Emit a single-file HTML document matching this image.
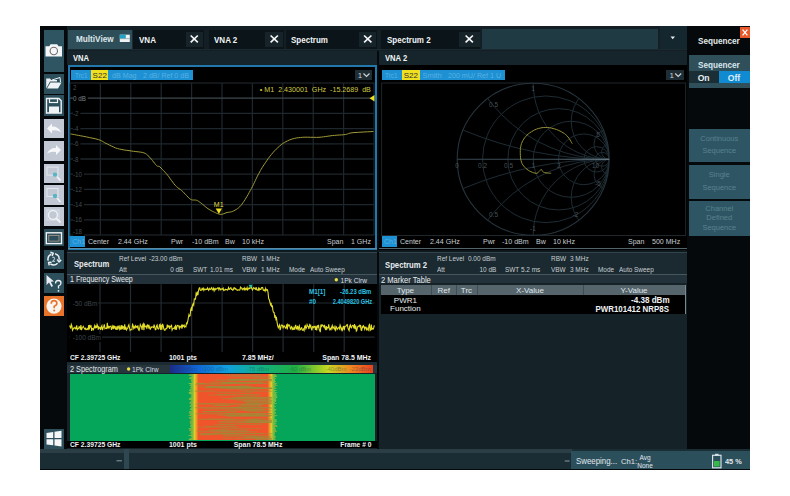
<!DOCTYPE html><html><head><meta charset="utf-8"><style>
html,body{margin:0;padding:0;background:#fff;width:790px;height:496px;overflow:hidden;position:relative;font-family:"Liberation Sans",sans-serif;}
.t{position:absolute;white-space:nowrap;line-height:1.2;}
svg{position:absolute;left:0;top:0;}
</style></head><body>
<div style="position:absolute;left:40px;top:26px;width:710px;height:444px;background:#05090b;"></div>
<div style="position:absolute;left:44px;top:29.5px;width:20px;height:42.0px;background:#2f5562;"></div>
<div style="position:absolute;left:44px;top:73.7px;width:20px;height:20.0px;background:#2c4f5b;"></div>
<div style="position:absolute;left:44px;top:95px;width:20px;height:21.200000000000003px;background:#2c4f5b;"></div>
<div style="position:absolute;left:44px;top:118.8px;width:20px;height:19.60000000000001px;background:#c2c9d4;"></div>
<div style="position:absolute;left:44px;top:141.4px;width:20px;height:19.19999999999999px;background:#c2c9d4;"></div>
<div style="position:absolute;left:44px;top:163.6px;width:20px;height:19.099999999999994px;background:#c2c9d4;"></div>
<div style="position:absolute;left:44px;top:185px;width:20px;height:20.19999999999999px;background:#c2c9d4;"></div>
<div style="position:absolute;left:44px;top:207.2px;width:20px;height:19.200000000000017px;background:#c2c9d4;"></div>
<div style="position:absolute;left:44px;top:229.4px;width:20px;height:17.099999999999994px;background:#2c4f5b;"></div>
<div style="position:absolute;left:44px;top:249.6px;width:20px;height:19.099999999999994px;background:#2c4f5b;"></div>
<div style="position:absolute;left:44px;top:273px;width:20px;height:20.19999999999999px;background:#2c4f5b;"></div>
<div style="position:absolute;left:44px;top:296.2px;width:20px;height:19.80000000000001px;background:#e8732a;"></div>
<div style="position:absolute;left:44px;top:428.5px;width:20px;height:20.100000000000023px;background:#2c4f5b;"></div>
<svg width="790" height="496"><path d="M45.5,46.2 L49.3,46.2 L50.6,44.2 L57.2,44.2 L58.5,46.2 L62,46.2 L62,56.5 L45.5,56.5 Z" fill="#f4f6f7"/><circle cx="53.8" cy="51" r="3.7" fill="none" stroke="#726a6a" stroke-width="1.1"/><path d="M46.2,78.5 L50,78.5 L51.2,80 L57,80 L57,81.5 L50,81.5 L46.2,88.5 Z" fill="#f0f3f5"/><path d="M50.5,82.5 L61.5,82.5 L58,88.5 L47,88.5 Z" fill="#f0f3f5"/><path d="M52,80 L60,77.5 L60.5,82" fill="none" stroke="#f0f3f5" stroke-width="1"/><path d="M46.5,98.5 L59,98.5 L61.2,100.7 L61.2,113 L46.5,113 Z" fill="none" stroke="#f0f3f5" stroke-width="1.4"/><rect x="49.5" y="98.5" width="8" height="4" fill="none" stroke="#f0f3f5" stroke-width="1.2"/><rect x="49" y="106.5" width="10" height="6.5" fill="#f0f3f5"/><path d="M47,128.5 L52,123.5 L52,126.5 Q58,126 61,132 Q57,129.5 52,130.5 L52,133.5 Z" fill="#f6f7f9"/><path d="M61,150 L56,145 L56,148 Q50,147.5 47,153.5 Q51,151 56,152 L56,155 Z" fill="#f6f7f9"/><rect x="47" y="167.1" width="11" height="8" fill="none" stroke="#e4e8ee" stroke-width="1"/><circle cx="55" cy="174.6" r="2.2" fill="#58b4c6"/><path d="M57,176.6 L60.5,180.6" stroke="#f0f3f5" stroke-width="1.6"/><rect x="47" y="188.5" width="11" height="8" fill="none" stroke="#e4e8ee" stroke-width="1"/><circle cx="55" cy="196" r="2.2" fill="#58b4c6"/><path d="M57,198 L60.5,202" stroke="#f0f3f5" stroke-width="1.6"/><circle cx="53" cy="215" r="4.5" fill="none" stroke="#f0f3f5" stroke-width="1.4"/><rect x="47" y="210" width="12" height="10" fill="none" stroke="#e0e6ea" stroke-width="0.8"/><path d="M56.3,218.3 L60.5,222.5" stroke="#f0f3f5" stroke-width="1.8"/><rect x="46.3" y="232.8" width="15.2" height="10.8" fill="none" stroke="#f0f3f5" stroke-width="1.4"/><rect x="48.8" y="235.3" width="10.2" height="5.8" fill="none" stroke="#c8a898" stroke-width="0.7"/><path d="M55.05,253.79 A5.6,5.6 0 0 1 59.18,259.69 M61.17,259.86 L58.99,261.88 L57.19,259.51 M57.56,263.16 A5.6,5.6 0 0 1 50.39,263.79 M49.24,265.43 L48.59,262.53 L51.54,262.15 M48.19,260.65 A5.6,5.6 0 0 1 51.23,254.12 M50.39,252.31 L53.23,253.19 L52.08,255.94" fill="none" stroke="#eef2f4" stroke-width="1.5" stroke-linejoin="round"/><path d="M52.3,257.3 Q54.8,256.6 54.6,258.6 Q54.4,260 52.4,261.3 L55,261.3" fill="none" stroke="#dfe6ea" stroke-width="0.9"/><path d="M46.5,275 L46.5,285 L49,282.5 L51.5,287 L53,286 L50.8,281.8 L54,281.5 Z" fill="#e8ecf0"/><path d="M55.5,283.5 Q55.5,280.5 58.2,280.5 Q61,280.5 61,283 Q61,285 58.5,286 L58.5,288.5" fill="none" stroke="#f0f3f5" stroke-width="1.3"/><circle cx="58.5" cy="290.8" r="0.9" fill="#f0f3f5"/><circle cx="54" cy="306.1" r="7.6" fill="#f8f4f0"/><path d="M51.2,303.8 Q51.2,300.6 54,300.6 Q56.9,300.6 56.9,303.3 Q56.9,305.2 54.2,306.2 L54.2,308.2" fill="none" stroke="#e8732a" stroke-width="1.6"/><circle cx="54.2" cy="310.6" r="1" fill="#e8732a"/><path d="M46.5,433 L53.2,432 L53.2,438 L46.5,438 Z M54.5,431.8 L61.5,430.8 L61.5,438 L54.5,438 Z M46.5,439.3 L53.2,439.3 L53.2,445.3 L46.5,444.5 Z M54.5,439.3 L61.5,439.3 L61.5,446.5 L54.5,445.5 Z" fill="#f4f6f7"/></svg>
<div style="position:absolute;left:67px;top:26px;width:620px;height:24.5px;background:#131f25;"></div>
<div style="position:absolute;left:67px;top:48.7px;width:620px;height:1.7999999999999972px;background:#1b2930;"></div>
<div style="position:absolute;left:68px;top:29.7px;width:64px;height:19.000000000000004px;background:#2e4f5a;"></div>
<div style="position:absolute;left:132px;top:29.7px;width:1px;height:19.000000000000004px;background:#1a2a30;"></div>
<div class="t" style="left:75.8px;top:34.2px;font-size:9px;color:#dfe6ea;font-weight:bold;transform:scaleX(0.91);transform-origin:left center;">MultiView</div>
<svg width="790" height="496"><rect x="119.8" y="34.7" width="10" height="7.3" fill="#eef3f6"/><rect x="119.8" y="34.7" width="6" height="3.8" fill="#22a2c2"/><rect x="119.8" y="38.5" width="10" height="0.6" fill="#6a8a96"/></svg>
<div style="position:absolute;left:133px;top:29.7px;width:70.5px;height:19.000000000000004px;background:#0b1418;"></div>
<div style="position:absolute;left:185.8px;top:31.6px;width:16.899999999999977px;height:15.799999999999997px;background:#16242a;"></div>
<div class="t" style="left:138.5px;top:35.0px;font-size:9px;color:#f2f5f7;font-weight:bold;transform:scaleX(0.89);transform-origin:left center;">VNA</div>
<svg width="790" height="496"><path d="M190.7,35.5 L197.8,42.4 M197.8,35.5 L190.7,42.4" stroke="#f4f6f8" stroke-width="1.7"/></svg>
<div style="position:absolute;left:208.6px;top:29.7px;width:75.4px;height:19.000000000000004px;background:#0b1418;"></div>
<div style="position:absolute;left:265.3px;top:31.6px;width:17.899999999999977px;height:15.799999999999997px;background:#16242a;"></div>
<div class="t" style="left:214.1px;top:35.0px;font-size:9px;color:#f2f5f7;font-weight:bold;transform:scaleX(0.89);transform-origin:left center;">VNA 2</div>
<svg width="790" height="496"><path d="M270.6,35.5 L277.9,42.4 M277.9,35.5 L270.6,42.4" stroke="#f4f6f8" stroke-width="1.7"/></svg>
<div style="position:absolute;left:285.7px;top:29.7px;width:91.30000000000001px;height:19.000000000000004px;background:#0b1418;"></div>
<div style="position:absolute;left:359.3px;top:31.6px;width:16.899999999999977px;height:15.799999999999997px;background:#16242a;"></div>
<div class="t" style="left:291.2px;top:35.0px;font-size:9px;color:#f2f5f7;font-weight:bold;transform:scaleX(0.89);transform-origin:left center;">Spectrum</div>
<svg width="790" height="496"><path d="M364.1,35.5 L371.4,42.4 M371.4,35.5 L364.1,42.4" stroke="#f4f6f8" stroke-width="1.7"/></svg>
<div style="position:absolute;left:381px;top:29.7px;width:99.30000000000001px;height:19.000000000000004px;background:#0b1418;"></div>
<div style="position:absolute;left:459px;top:31.6px;width:20.5px;height:15.799999999999997px;background:#16242a;"></div>
<div class="t" style="left:386.5px;top:35.0px;font-size:9px;color:#f2f5f7;font-weight:bold;transform:scaleX(0.89);transform-origin:left center;">Spectrum 2</div>
<svg width="790" height="496"><path d="M465.6,35.5 L472.9,42.4 M472.9,35.5 L465.6,42.4" stroke="#f4f6f8" stroke-width="1.7"/></svg>
<div style="position:absolute;left:481.7px;top:29.3px;width:176.3px;height:19.400000000000002px;background:#203a43;"></div>
<div style="position:absolute;left:660px;top:26px;width:27px;height:22.700000000000003px;background:#15272e;"></div>
<svg width="790" height="496"><path d="M670.5,36.5 L675,36.5 L672.75,39.3 Z" fill="#e8eef0"/></svg>
<div style="position:absolute;left:67px;top:50.5px;width:310px;height:14.0px;background:#16252c;"></div>
<div style="position:absolute;left:378.5px;top:50.5px;width:308.5px;height:14.0px;background:#16252c;"></div>
<div class="t" style="left:73.4px;top:53.1px;font-size:9.3px;color:#f2f5f7;font-weight:bold;transform:scaleX(0.82);transform-origin:left center;">VNA</div>
<div class="t" style="left:384.8px;top:53.1px;font-size:9.3px;color:#f2f5f7;font-weight:bold;transform:scaleX(0.82);transform-origin:left center;">VNA 2</div>
<div style="position:absolute;left:67px;top:65px;width:310px;height:185px;background:#000;"></div>
<div style="position:absolute;left:68px;top:65px;width:309.2px;height:184.8px;background:transparent;border:2px solid #2278aa;box-sizing:border-box;"></div>
<svg width="790" height="496"><rect x="70" y="83" width="304" height="152" fill="none" stroke="#252d32" stroke-width="1"/><line x1="100.4" y1="83" x2="100.4" y2="235" stroke="#1e272d" stroke-width="1.2"/><line x1="130.8" y1="83" x2="130.8" y2="235" stroke="#1e272d" stroke-width="1.2"/><line x1="161.2" y1="83" x2="161.2" y2="235" stroke="#1e272d" stroke-width="1.2"/><line x1="191.6" y1="83" x2="191.6" y2="235" stroke="#1e272d" stroke-width="1.2"/><line x1="222.0" y1="83" x2="222.0" y2="235" stroke="#1e272d" stroke-width="1.2"/><line x1="252.4" y1="83" x2="252.4" y2="235" stroke="#1e272d" stroke-width="1.2"/><line x1="282.8" y1="83" x2="282.8" y2="235" stroke="#1e272d" stroke-width="1.2"/><line x1="313.2" y1="83" x2="313.2" y2="235" stroke="#1e272d" stroke-width="1.2"/><line x1="343.6" y1="83" x2="343.6" y2="235" stroke="#1e272d" stroke-width="1.2"/><line x1="70" y1="98.2" x2="374" y2="98.2" stroke="#3e484e" stroke-width="1.3"/><line x1="70" y1="113.4" x2="374" y2="113.4" stroke="#1e272d" stroke-width="1.3"/><line x1="70" y1="128.6" x2="374" y2="128.6" stroke="#1e272d" stroke-width="1.3"/><line x1="70" y1="143.8" x2="374" y2="143.8" stroke="#1e272d" stroke-width="1.3"/><line x1="70" y1="159.0" x2="374" y2="159.0" stroke="#1e272d" stroke-width="1.3"/><line x1="70" y1="174.2" x2="374" y2="174.2" stroke="#1e272d" stroke-width="1.3"/><line x1="70" y1="189.4" x2="374" y2="189.4" stroke="#1e272d" stroke-width="1.3"/><line x1="70" y1="204.6" x2="374" y2="204.6" stroke="#1e272d" stroke-width="1.3"/><line x1="70" y1="219.8" x2="374" y2="219.8" stroke="#1e272d" stroke-width="1.3"/><path d="M70.5,133.9 L71.5,134.1 L72.9,134.3 L74.5,134.6 L76.4,135.0 L78.4,135.4 L80.7,135.8 L83.3,136.3 L86.4,136.9 L89.7,137.6 L93.0,138.3 L95.9,138.9 L98.4,139.6 L100.2,140.2 L101.5,140.8 L102.6,141.4 L103.6,142.0 L104.6,142.7 L106.0,143.4 L107.7,144.2 L109.4,145.1 L111.3,146.0 L113.3,146.9 L115.3,147.8 L117.4,148.5 L119.6,149.1 L121.9,149.5 L124.3,150.0 L126.7,150.3 L129.0,150.6 L131.3,151.0 L133.6,151.3 L135.9,151.6 L138.1,151.8 L140.3,152.1 L142.3,152.4 L144.0,152.9 L145.4,153.5 L146.6,154.3 L147.6,155.1 L148.4,156.0 L149.3,157.0 L150.3,158.0 L151.4,159.2 L152.5,160.6 L153.6,162.0 L154.7,163.4 L155.7,164.7 L156.6,165.6 L157.3,166.1 L157.8,166.3 L158.2,166.3 L158.7,166.3 L159.2,166.4 L160.0,167.0 L161.0,168.0 L162.2,169.2 L163.5,170.6 L164.9,172.1 L166.3,173.6 L167.6,175.2 L168.9,176.8 L170.1,178.6 L171.4,180.4 L172.7,182.1 L173.9,183.8 L175.2,185.3 L176.5,186.6 L177.7,187.6 L179.0,188.6 L180.3,189.5 L181.5,190.5 L182.8,191.6 L184.1,192.9 L185.4,194.3 L186.7,195.7 L188.0,197.1 L189.2,198.3 L190.4,199.2 L191.5,199.7 L192.6,200.0 L193.7,200.0 L194.7,200.0 L195.7,200.1 L196.7,200.3 L197.6,200.7 L198.4,201.2 L199.3,201.8 L200.1,202.4 L200.9,203.0 L201.8,203.7 L202.8,204.5 L203.8,205.3 L204.8,206.2 L205.9,207.1 L206.9,207.9 L208.0,208.7 L209.1,209.4 L210.1,210.0 L211.2,210.6 L212.3,211.2 L213.3,211.7 L214.4,212.2 L215.5,212.7 L216.5,213.2 L217.6,213.6 L218.7,214.0 L219.7,214.3 L220.8,214.4 L221.8,214.3 L222.9,214.0 L223.9,213.7 L225.0,213.2 L226.0,212.8 L227.0,212.5 L228.0,212.3 L228.9,212.2 L229.9,212.1 L230.8,211.9 L231.8,211.7 L232.8,211.3 L233.9,210.8 L235.0,210.2 L236.2,209.5 L237.4,208.7 L238.6,207.8 L239.7,206.8 L240.8,205.6 L241.8,204.3 L242.9,202.8 L243.9,201.3 L245.0,199.7 L246.0,198.0 L247.1,196.3 L248.2,194.4 L249.2,192.5 L250.3,190.5 L251.4,188.5 L252.4,186.6 L253.4,184.6 L254.3,182.7 L255.3,180.6 L256.2,178.7 L257.1,176.8 L258.0,175.0 L258.9,173.4 L259.7,171.9 L260.4,170.5 L261.3,169.1 L262.2,167.6 L263.2,166.0 L264.4,164.2 L265.7,162.3 L267.0,160.3 L268.4,158.3 L269.9,156.3 L271.4,154.5 L272.9,152.7 L274.5,150.9 L276.2,149.2 L277.9,147.6 L279.5,146.1 L281.2,144.7 L282.8,143.5 L284.4,142.5 L286.0,141.6 L287.7,140.8 L289.4,140.0 L291.1,139.4 L292.9,138.8 L294.6,138.4 L296.4,138.0 L298.3,137.7 L300.4,137.5 L302.6,137.3 L305.1,137.2 L307.8,137.2 L310.7,137.3 L313.6,137.3 L316.4,137.4 L319.0,137.3 L321.4,137.1 L323.6,136.8 L325.8,136.5 L327.9,136.2 L330.0,135.9 L332.2,135.6 L334.5,135.4 L336.8,135.2 L339.2,135.0 L341.5,134.9 L343.6,134.7 L345.4,134.5 L346.7,134.2 L347.5,134.0 L348.2,133.7 L348.9,133.4 L350.1,133.1 L352.0,132.8 L355.0,132.5 L358.8,132.3 L363.1,132.0 L367.3,131.8 L370.9,131.6 L373.4,131.5" fill="none" stroke="#a09a38" stroke-width="1" stroke-linejoin="round"/><path d="M215.7,208.5 L222,208.5 L218.9,214 Z" fill="#f0e020"/><path d="M374.5,95 L374.5,101.5 L369.5,98.2 Z" fill="#f0e020"/></svg>
<div style="position:absolute;left:71px;top:69.6px;width:121.6px;height:10.400000000000006px;background:#1e90d4;"></div>
<div style="position:absolute;left:90.7px;top:69.6px;width:17.700000000000003px;height:10.400000000000006px;background:#f0e020;"></div>
<div class="t" style="left:74.5px;top:71.2px;font-size:7.5px;color:#58b0e0;font-weight:normal;transform:scaleX(0.85);transform-origin:left center;">Trc1</div>
<div class="t" style="left:92.6px;top:70.9px;font-size:8px;color:#333;font-weight:normal;">S22</div>
<div class="t" style="left:112px;top:71.2px;font-size:7.5px;color:#58b0e0;font-weight:normal;transform:scaleX(0.95);transform-origin:left center;">dB Mag</div>
<div class="t" style="left:143.3px;top:71.2px;font-size:7.5px;color:#58b0e0;font-weight:normal;transform:scaleX(0.94);transform-origin:left center;">2 dB/ Ref 0 dB</div>
<div style="position:absolute;left:354.8px;top:69.7px;width:17.19999999999999px;height:10.299999999999997px;background:#1f2d34;"></div>
<div class="t" style="left:357.8px;top:70.9px;font-size:8px;color:#c9d2d6;font-weight:normal;">1</div>
<svg width="790" height="496"><path d="M363.5,73.5 L366.5,76.5 L369.5,73.5" fill="none" stroke="#c9d2d6" stroke-width="1.2"/></svg>
<div class="t" style="left:73.4px;top:84.0px;font-size:6.8px;color:#434b51;font-weight:normal;transform:scaleX(0.92);transform-origin:left center;background:#000;padding-right:2px;">2</div>
<div class="t" style="left:73.4px;top:94.8px;font-size:6.8px;color:#7a8388;font-weight:normal;transform:scaleX(0.92);transform-origin:left center;background:#000;padding-right:2px;">0 dB</div>
<div class="t" style="left:73.4px;top:110.0px;font-size:6.8px;color:#434b51;font-weight:normal;transform:scaleX(0.92);transform-origin:left center;background:#000;padding-right:2px;">-2</div>
<div class="t" style="left:73.4px;top:125.2px;font-size:6.8px;color:#434b51;font-weight:normal;transform:scaleX(0.92);transform-origin:left center;background:#000;padding-right:2px;">-4</div>
<div class="t" style="left:73.4px;top:140.4px;font-size:6.8px;color:#434b51;font-weight:normal;transform:scaleX(0.92);transform-origin:left center;background:#000;padding-right:2px;">-6</div>
<div class="t" style="left:73.4px;top:155.6px;font-size:6.8px;color:#434b51;font-weight:normal;transform:scaleX(0.92);transform-origin:left center;background:#000;padding-right:2px;">-8</div>
<div class="t" style="left:73.4px;top:170.8px;font-size:6.8px;color:#434b51;font-weight:normal;transform:scaleX(0.92);transform-origin:left center;background:#000;padding-right:2px;">-10</div>
<div class="t" style="left:73.4px;top:186.0px;font-size:6.8px;color:#434b51;font-weight:normal;transform:scaleX(0.92);transform-origin:left center;background:#000;padding-right:2px;">-12</div>
<div class="t" style="left:73.4px;top:201.2px;font-size:6.8px;color:#434b51;font-weight:normal;transform:scaleX(0.92);transform-origin:left center;background:#000;padding-right:2px;">-14</div>
<div class="t" style="left:73.4px;top:216.4px;font-size:6.8px;color:#434b51;font-weight:normal;transform:scaleX(0.92);transform-origin:left center;background:#000;padding-right:2px;">-16</div>
<div class="t" style="left:73.4px;top:228.4px;font-size:6.8px;color:#434b51;font-weight:normal;transform:scaleX(0.92);transform-origin:left center;background:#000;padding-right:2px;">-18</div>
<div class="t" style="right:419px;top:85.4px;font-size:7.5px;color:#d0c840;font-weight:normal;transform:scaleX(0.95);transform-origin:right center;">&bull; M1&nbsp;&nbsp;2.430001&nbsp;&nbsp;GHz&nbsp;&nbsp;-15.2689&nbsp;&nbsp;dB</div>
<div class="t" style="left:118.69999999999999px;width:200px;text-align:center;top:200.8px;font-size:7px;color:#e0d840;font-weight:normal;">M1</div>
<div style="position:absolute;left:70px;top:235.6px;width:15px;height:11.099999999999994px;background:#1e90d4;"></div>
<div class="t" style="left:72.3px;top:237.7px;font-size:7px;color:#58b0e0;font-weight:normal;">Ch1</div>
<div class="t" style="left:88.3px;top:237.1px;font-size:8px;color:#c8cdd0;font-weight:normal;transform:scaleX(0.88);transform-origin:left center;">Center</div>
<div class="t" style="left:118px;top:237.1px;font-size:8px;color:#c8cdd0;font-weight:normal;transform:scaleX(0.88);transform-origin:left center;">2.44 GHz</div>
<div class="t" style="left:171.3px;top:237.1px;font-size:8px;color:#c8cdd0;font-weight:normal;transform:scaleX(0.88);transform-origin:left center;">Pwr</div>
<div class="t" style="left:191.6px;top:237.1px;font-size:8px;color:#c8cdd0;font-weight:normal;transform:scaleX(0.88);transform-origin:left center;">-10 dBm</div>
<div class="t" style="left:225px;top:237.1px;font-size:8px;color:#c8cdd0;font-weight:normal;transform:scaleX(0.88);transform-origin:left center;">Bw</div>
<div class="t" style="left:242px;top:237.1px;font-size:8px;color:#c8cdd0;font-weight:normal;transform:scaleX(0.88);transform-origin:left center;">10 kHz</div>
<div class="t" style="left:327px;top:237.1px;font-size:8px;color:#c8cdd0;font-weight:normal;transform:scaleX(0.88);transform-origin:left center;">Span</div>
<div class="t" style="left:350.7px;top:237.1px;font-size:8px;color:#c8cdd0;font-weight:normal;transform:scaleX(0.88);transform-origin:left center;">1 GHz</div>
<div style="position:absolute;left:378.5px;top:65px;width:308.5px;height:185px;background:#000;"></div>
<svg width="790" height="496"><rect x="381.6" y="83" width="304" height="152.5" fill="none" stroke="#1f272b" stroke-width="1"/><defs><clipPath id="uc"><circle cx="533.2" cy="159.3" r="76"/></clipPath></defs><g clip-path="url(#uc)" fill="none" stroke="#1e2c34" stroke-width="1"><circle cx="545.87" cy="159.3" r="63.33"/><circle cx="558.53" cy="159.3" r="50.67"/><circle cx="571.20" cy="159.3" r="38.00"/><circle cx="583.87" cy="159.3" r="25.33"/><circle cx="596.53" cy="159.3" r="12.67"/><circle cx="602.29" cy="159.3" r="6.91"/><circle cx="609.20" cy="-220.70" r="380.00"/><circle cx="609.20" cy="539.30" r="380.00"/><circle cx="609.20" cy="7.30" r="152.00"/><circle cx="609.20" cy="311.30" r="152.00"/><circle cx="609.20" cy="83.30" r="76.00"/><circle cx="609.20" cy="235.30" r="76.00"/><circle cx="609.20" cy="121.30" r="38.00"/><circle cx="609.20" cy="197.30" r="38.00"/><circle cx="609.20" cy="144.10" r="15.20"/><circle cx="609.20" cy="174.50" r="15.20"/><circle cx="609.20" cy="151.70" r="7.60"/><circle cx="609.20" cy="166.90" r="7.60"/></g><circle cx="533.2" cy="159.3" r="76" fill="none" stroke="#26343c" stroke-width="1.1"/><defs><linearGradient id="ax" x1="0" x2="1"><stop offset="0" stop-color="#2e3c44"/><stop offset="0.6" stop-color="#34444c"/><stop offset="1" stop-color="#6a7c86"/></linearGradient></defs><rect x="457.20000000000005" y="158.70000000000002" width="152" height="1.2" fill="url(#ax)"/><path d="M572.3,143.6 L571.7,142.7 L571.0,141.5 L570.1,140.0 L569.1,138.4 L568.0,137.0 L566.9,135.7 L565.7,134.6 L564.4,133.6 L563.0,132.7 L561.5,131.8 L560.0,131.0 L558.4,130.3 L556.7,129.6 L554.9,129.0 L553.1,128.5 L551.2,128.0 L549.3,127.7 L547.5,127.5 L545.7,127.5 L543.8,127.5 L542.0,127.7 L540.1,128.1 L538.3,128.5 L536.6,129.1 L534.9,129.8 L533.2,130.7 L531.5,131.7 L529.8,132.8 L528.3,133.9 L527.0,135.1 L525.8,136.4 L524.7,137.7 L523.7,139.1 L522.9,140.5 L522.1,142.1 L521.5,143.6 L521.0,145.2 L520.7,146.9 L520.4,148.7 L520.3,150.4 L520.3,152.2 L520.3,153.9 L520.4,155.6 L520.5,157.3 L520.7,159.0 L521.1,160.6 L521.5,162.2 L522.1,163.6 L522.8,164.9 L523.8,166.2 L524.8,167.3 L525.9,168.4 L527.0,169.3 L528.2,170.2 L529.5,171.0 L530.9,171.7 L532.3,172.3 L533.7,172.8 L535.0,173.1 L536.0,173.3 L536.8,173.3 L537.4,173.1 L537.9,172.7 L538.2,172.3 L538.6,171.9 L539.0,171.5 L539.4,171.1 L539.8,170.7 L540.2,170.2 L540.5,169.8 L540.9,169.5 L541.2,169.4 L541.5,169.5 L541.7,169.8 L541.9,170.2 L542.2,170.7 L542.4,171.2 L542.7,171.5 L543.0,171.8 L543.3,172.0 L543.6,172.2 L544.0,172.4 L544.5,172.5 L545.1,172.7 L546.0,172.8 L547.1,173.0 L548.3,173.1 L549.5,173.2 L550.5,173.2 L551.2,173.3" fill="none" stroke="#969036" stroke-width="1" stroke-linejoin="round"/></svg>
<div class="t" style="left:393.5px;width:200px;text-align:center;top:100.8px;font-size:6.5px;color:#465056;font-weight:normal;">0.5</div>
<div class="t" style="left:433px;width:200px;text-align:center;top:84.8px;font-size:6.5px;color:#465056;font-weight:normal;">1</div>
<div class="t" style="left:357px;width:200px;text-align:center;top:161.8px;font-size:6.5px;color:#465056;font-weight:normal;">0</div>
<div class="t" style="left:382.5px;width:200px;text-align:center;top:161.8px;font-size:6.5px;color:#465056;font-weight:normal;">0.2</div>
<div class="t" style="left:408.5px;width:200px;text-align:center;top:161.8px;font-size:6.5px;color:#465056;font-weight:normal;">0.5</div>
<div class="t" style="left:433.4px;width:200px;text-align:center;top:161.8px;font-size:6.5px;color:#465056;font-weight:normal;">1</div>
<div class="t" style="left:458.79999999999995px;width:200px;text-align:center;top:161.8px;font-size:6.5px;color:#465056;font-weight:normal;">2</div>
<div class="t" style="left:495.6px;width:200px;text-align:center;top:161.8px;font-size:6.5px;color:#465056;font-weight:normal;">10</div>
<div class="t" style="left:498px;width:200px;text-align:center;top:131.3px;font-size:6.5px;color:#465056;font-weight:normal;">5</div>
<div class="t" style="left:393.5px;width:200px;text-align:center;top:210.8px;font-size:6.5px;color:#465056;font-weight:normal;">0.5</div>
<div class="t" style="left:433px;width:200px;text-align:center;top:224.8px;font-size:6.5px;color:#465056;font-weight:normal;">-1</div>
<div class="t" style="left:475.6px;width:200px;text-align:center;top:211.2px;font-size:6.5px;color:#465056;font-weight:normal;">-2</div>
<div class="t" style="left:498px;width:200px;text-align:center;top:180.2px;font-size:6.5px;color:#465056;font-weight:normal;">-5</div>
<div style="position:absolute;left:382.1px;top:69.8px;width:122.5px;height:10.600000000000009px;background:#1e90d4;"></div>
<div style="position:absolute;left:401.8px;top:69.8px;width:18.19999999999999px;height:10.600000000000009px;background:#f0e020;"></div>
<div class="t" style="left:385px;top:71.3px;font-size:7.5px;color:#58b0e0;font-weight:normal;transform:scaleX(0.85);transform-origin:left center;">Trc1</div>
<div class="t" style="left:403.7px;top:71.0px;font-size:8px;color:#333;font-weight:normal;">S22</div>
<div class="t" style="left:422.4px;top:71.3px;font-size:7.5px;color:#58b0e0;font-weight:normal;">Smith</div>
<div class="t" style="left:447.9px;top:71.3px;font-size:7.5px;color:#58b0e0;font-weight:normal;transform:scaleX(0.95);transform-origin:left center;">200 mU/ Ref 1 U</div>
<div style="position:absolute;left:666.3px;top:70.2px;width:18.200000000000045px;height:9.799999999999997px;background:#1f2d34;"></div>
<div class="t" style="left:669.5px;top:70.9px;font-size:8px;color:#c9d2d6;font-weight:normal;">1</div>
<svg width="790" height="496"><path d="M675.2,73.5 L678.2,76.5 L681.2,73.5" fill="none" stroke="#c9d2d6" stroke-width="1.2"/></svg>
<div style="position:absolute;left:381.6px;top:236px;width:15.399999999999977px;height:11px;background:#1e90d4;"></div>
<div class="t" style="left:384px;top:238.0px;font-size:7px;color:#58b0e0;font-weight:normal;">Ch1</div>
<div class="t" style="left:400px;top:237.4px;font-size:8px;color:#c8cdd0;font-weight:normal;transform:scaleX(0.88);transform-origin:left center;">Center</div>
<div class="t" style="left:429.5px;top:237.4px;font-size:8px;color:#c8cdd0;font-weight:normal;transform:scaleX(0.88);transform-origin:left center;">2.44 GHz</div>
<div class="t" style="left:482.5px;top:237.4px;font-size:8px;color:#c8cdd0;font-weight:normal;transform:scaleX(0.88);transform-origin:left center;">Pwr</div>
<div class="t" style="left:502px;top:237.4px;font-size:8px;color:#c8cdd0;font-weight:normal;transform:scaleX(0.88);transform-origin:left center;">-10 dBm</div>
<div class="t" style="left:536px;top:237.4px;font-size:8px;color:#c8cdd0;font-weight:normal;transform:scaleX(0.88);transform-origin:left center;">Bw</div>
<div class="t" style="left:553px;top:237.4px;font-size:8px;color:#c8cdd0;font-weight:normal;transform:scaleX(0.88);transform-origin:left center;">10 kHz</div>
<div class="t" style="left:628px;top:237.4px;font-size:8px;color:#c8cdd0;font-weight:normal;transform:scaleX(0.88);transform-origin:left center;">Span</div>
<div class="t" style="left:652px;top:237.4px;font-size:8px;color:#c8cdd0;font-weight:normal;transform:scaleX(0.88);transform-origin:left center;">500 MHz</div>
<div style="position:absolute;left:67px;top:249.8px;width:620px;height:2.1999999999999886px;background:#0e191e;"></div>
<div style="position:absolute;left:67px;top:252px;width:310px;height:196.5px;background:#152228;"></div>
<div style="position:absolute;left:67px;top:252px;width:310px;height:21.5px;background:#1b2930;"></div>
<div style="position:absolute;left:378.5px;top:252px;width:308.5px;height:22px;background:#1b2930;"></div>
<div style="position:absolute;left:378.5px;top:274px;width:308.5px;height:174.5px;background:#152228;"></div>
<div style="position:absolute;left:68px;top:248.2px;width:309.2px;height:1.1000000000000227px;background:#5f8aa4;"></div>
<div style="position:absolute;left:379.2px;top:248.2px;width:307.8px;height:1.1000000000000227px;background:#52646e;"></div>
<div style="position:absolute;left:67px;top:252px;width:310px;height:0.8000000000000114px;background:#34444c;"></div>
<div class="t" style="left:73.7px;top:259.0px;font-size:9.2px;color:#e6ebee;font-weight:bold;transform:scaleX(0.83);transform-origin:left center;">Spectrum</div>
<div class="t" style="left:119px;top:255.0px;font-size:7px;color:#c8d0d4;font-weight:normal;transform:scaleX(0.92);transform-origin:left center;">Ref Level</div>
<div class="t" style="left:149.4px;top:255.0px;font-size:7px;color:#c8d0d4;font-weight:normal;transform:scaleX(0.92);transform-origin:left center;">-23.00 dBm</div>
<div class="t" style="left:119px;top:265.8px;font-size:7px;color:#c8d0d4;font-weight:normal;transform:scaleX(0.92);transform-origin:left center;">Att</div>
<div class="t" style="right:606.6px;top:265.8px;font-size:7px;color:#c8d0d4;font-weight:normal;transform:scaleX(0.92);transform-origin:right center;">0 dB</div>
<div class="t" style="left:192.5px;top:265.8px;font-size:7px;color:#c8d0d4;font-weight:normal;transform:scaleX(0.92);transform-origin:left center;">SWT</div>
<div class="t" style="left:210px;top:265.8px;font-size:7px;color:#c8d0d4;font-weight:normal;transform:scaleX(0.92);transform-origin:left center;">1.01 ms</div>
<div class="t" style="left:242px;top:255.1px;font-size:7px;color:#c8d0d4;font-weight:normal;transform:scaleX(0.92);transform-origin:left center;">RBW</div>
<div class="t" style="left:261px;top:255.1px;font-size:7px;color:#c8d0d4;font-weight:normal;transform:scaleX(0.92);transform-origin:left center;">1 MHz</div>
<div class="t" style="left:242px;top:266.1px;font-size:7px;color:#c8d0d4;font-weight:normal;transform:scaleX(0.92);transform-origin:left center;">VBW</div>
<div class="t" style="left:261px;top:266.1px;font-size:7px;color:#c8d0d4;font-weight:normal;transform:scaleX(0.92);transform-origin:left center;">1 MHz</div>
<div class="t" style="left:289px;top:266.1px;font-size:7px;color:#c8d0d4;font-weight:normal;transform:scaleX(0.92);transform-origin:left center;">Mode</div>
<div class="t" style="left:310px;top:266.1px;font-size:7px;color:#c8d0d4;font-weight:normal;transform:scaleX(0.92);transform-origin:left center;">Auto Sweep</div>
<div style="position:absolute;left:67px;top:273.5px;width:310px;height:1.1000000000000227px;background:#46565e;"></div>
<div style="position:absolute;left:67px;top:274.6px;width:310px;height:9.699999999999989px;background:#23323a;"></div>
<div class="t" style="left:70px;top:275.3px;font-size:8.3px;color:#e8ecee;font-weight:normal;transform:scaleX(0.85);transform-origin:left center;">1 Frequency Sweep</div>
<div class="t" style="right:422.6px;top:275.7px;font-size:8px;color:#d8dee2;font-weight:normal;transform:scaleX(0.83);transform-origin:right center;">1Pk Clrw</div>
<svg width="790" height="496"><circle cx="336.3" cy="279.8" r="1.7" fill="#f0e040"/><circle cx="128.6" cy="369" r="1.7" fill="#f0e040"/></svg>
<div style="position:absolute;left:67px;top:284.3px;width:310px;height:67.69999999999999px;background:#000;"></div>
<svg width="790" height="496"><line x1="100.0" y1="284.3" x2="100.0" y2="352" stroke="#222b31" stroke-width="1.2"/><line x1="130.5" y1="284.3" x2="130.5" y2="352" stroke="#222b31" stroke-width="1.2"/><line x1="161.1" y1="284.3" x2="161.1" y2="352" stroke="#222b31" stroke-width="1.2"/><line x1="191.6" y1="284.3" x2="191.6" y2="352" stroke="#222b31" stroke-width="1.2"/><line x1="222.1" y1="284.3" x2="222.1" y2="352" stroke="#222b31" stroke-width="1.2"/><line x1="252.6" y1="284.3" x2="252.6" y2="352" stroke="#222b31" stroke-width="1.2"/><line x1="283.1" y1="284.3" x2="283.1" y2="352" stroke="#222b31" stroke-width="1.2"/><line x1="313.7" y1="284.3" x2="313.7" y2="352" stroke="#222b31" stroke-width="1.2"/><line x1="344.2" y1="284.3" x2="344.2" y2="352" stroke="#222b31" stroke-width="1.2"/><line x1="69.5" y1="303.0" x2="374.7" y2="303.0" stroke="#222b31" stroke-width="1.2"/><line x1="69.5" y1="337.2" x2="374.7" y2="337.2" stroke="#222b31" stroke-width="1.2"/><path d="M69.5,325.7 L70.1,326.5 L70.7,328.5 L71.3,324.4 L71.9,325.9 L72.5,330.3 L73.1,329.3 L73.7,328.1 L74.3,328.1 L74.9,327.4 L75.5,328.9 L76.1,328.8 L76.7,325.4 L77.3,329.5 L77.9,328.6 L78.5,328.6 L79.1,326.7 L79.7,327.0 L80.3,329.6 L80.9,325.1 L81.5,330.1 L82.1,328.1 L82.7,327.3 L83.3,326.4 L83.9,327.8 L84.5,328.4 L85.1,329.4 L85.7,328.3 L86.3,329.5 L86.9,329.7 L87.5,328.6 L88.1,329.3 L88.7,325.2 L89.3,329.4 L89.9,324.8 L90.5,326.8 L91.1,326.1 L91.7,330.9 L92.3,328.4 L92.9,328.6 L93.5,329.6 L94.1,327.3 L94.7,325.5 L95.3,328.3 L95.9,325.5 L96.5,328.0 L97.1,324.6 L97.7,326.2 L98.3,329.7 L98.9,327.1 L99.5,328.2 L100.1,327.7 L100.7,329.9 L101.3,326.9 L101.9,325.7 L102.5,330.2 L103.1,327.8 L103.7,326.8 L104.3,324.4 L104.9,328.6 L105.5,328.1 L106.1,328.4 L106.7,328.5 L107.3,322.7 L107.9,328.4 L108.5,325.8 L109.1,327.9 L109.7,326.5 L110.3,326.5 L110.9,326.1 L111.5,329.9 L112.1,327.7 L112.7,326.2 L113.3,329.1 L113.9,325.4 L114.5,328.5 L115.1,326.2 L115.7,329.3 L116.3,329.4 L116.9,326.3 L117.5,329.6 L118.1,325.7 L118.7,327.5 L119.3,329.1 L119.9,325.4 L120.5,329.1 L121.1,329.1 L121.7,325.1 L122.3,329.1 L122.9,326.4 L123.5,326.8 L124.1,329.8 L124.7,324.3 L125.3,329.6 L125.9,326.9 L126.5,329.9 L127.1,328.8 L127.7,328.3 L128.3,326.0 L128.9,324.7 L129.5,327.8 L130.1,330.3 L130.7,329.7 L131.3,329.8 L131.9,329.7 L132.5,324.4 L133.1,325.3 L133.7,328.3 L134.3,326.8 L134.9,328.0 L135.5,325.8 L136.1,327.2 L136.7,326.4 L137.3,327.5 L137.9,325.3 L138.5,329.8 L139.1,330.4 L139.7,328.1 L140.3,324.6 L140.9,325.9 L141.5,326.8 L142.1,330.0 L142.7,324.6 L143.3,323.7 L143.9,330.1 L144.5,324.8 L145.1,326.2 L145.7,326.4 L146.3,327.8 L146.9,325.4 L147.5,325.0 L148.1,328.6 L148.7,324.8 L149.3,326.5 L149.9,329.0 L150.5,329.1 L151.1,326.9 L151.7,327.3 L152.3,326.8 L152.9,327.1 L153.5,327.5 L154.1,324.7 L154.7,326.9 L155.3,329.9 L155.9,329.7 L156.5,325.9 L157.1,325.0 L157.7,328.3 L158.3,329.1 L158.9,328.7 L159.5,324.9 L160.1,324.3 L160.7,329.9 L161.3,324.9 L161.9,329.6 L162.5,324.4 L163.1,325.0 L163.7,328.3 L164.3,330.0 L164.9,330.2 L165.5,328.9 L166.1,328.6 L166.7,328.8 L167.3,324.7 L167.9,327.7 L168.5,325.8 L169.1,325.8 L169.7,328.8 L170.3,326.5 L170.9,326.4 L171.5,324.8 L172.1,330.1 L172.7,328.8 L173.3,328.4 L173.9,328.3 L174.5,327.2 L175.1,329.7 L175.7,324.9 L176.3,329.8 L176.9,327.0 L177.5,325.4 L178.1,325.5 L178.7,326.2 L179.3,328.4 L179.9,326.1 L180.5,326.8 L181.1,327.8 L181.7,324.6 L182.3,327.2 L182.9,325.3 L183.5,326.2 L184.1,325.2 L184.7,327.2 L185.3,326.3 L185.9,326.8 L186.5,323.1 L187.1,323.7 L187.7,321.5 L188.3,318.0 L188.9,314.8 L189.5,316.2 L190.1,315.8 L190.7,309.5 L191.3,307.9 L191.9,310.9 L192.5,305.1 L193.1,303.8 L193.7,305.1 L194.3,299.0 L194.9,298.8 L195.5,299.1 L196.1,293.5 L196.7,294.8 L197.3,291.6 L197.9,295.2 L198.5,290.5 L199.1,288.3 L199.7,287.8 L200.3,290.2 L200.9,290.3 L201.5,289.8 L202.1,288.4 L202.7,289.5 L203.3,288.3 L203.9,290.4 L204.5,289.1 L205.1,289.0 L205.7,289.7 L206.3,289.2 L206.9,289.4 L207.5,288.0 L208.1,289.5 L208.7,290.3 L209.3,288.5 L209.9,289.3 L210.5,289.4 L211.1,288.4 L211.7,287.7 L212.3,289.8 L212.9,289.7 L213.5,288.3 L214.1,290.8 L214.7,289.0 L215.3,289.8 L215.9,288.5 L216.5,289.1 L217.1,288.6 L217.7,287.8 L218.3,287.8 L218.9,289.8 L219.5,288.1 L220.1,288.7 L220.7,289.9 L221.3,289.3 L221.9,288.7 L222.5,289.1 L223.1,288.1 L223.7,290.4 L224.3,289.9 L224.9,290.3 L225.5,289.2 L226.1,289.4 L226.7,289.6 L227.3,290.1 L227.9,289.3 L228.5,287.5 L229.1,289.5 L229.7,289.1 L230.3,288.1 L230.9,287.6 L231.5,289.4 L232.1,289.2 L232.7,290.2 L233.3,289.9 L233.9,287.7 L234.5,287.7 L235.1,289.1 L235.7,288.5 L236.3,289.6 L236.9,290.1 L237.5,290.3 L238.1,289.7 L238.7,289.9 L239.3,290.1 L239.9,289.8 L240.5,287.1 L241.1,287.7 L241.7,288.0 L242.3,289.6 L242.9,288.8 L243.5,288.4 L244.1,289.8 L244.7,288.0 L245.3,289.7 L245.9,288.6 L246.5,289.3 L247.1,287.5 L247.7,289.8 L248.3,288.9 L248.9,288.1 L249.5,288.7 L250.1,287.6 L250.7,288.0 L251.3,286.9 L251.9,288.8 L252.5,290.0 L253.1,288.7 L253.7,287.6 L254.3,288.2 L254.9,288.9 L255.5,289.4 L256.1,287.2 L256.7,289.7 L257.3,289.9 L257.9,290.3 L258.5,288.2 L259.1,289.9 L259.7,288.5 L260.3,289.5 L260.9,289.4 L261.5,287.6 L262.1,287.4 L262.7,287.7 L263.3,290.2 L263.9,290.4 L264.5,289.9 L265.1,291.1 L265.7,288.4 L266.3,290.3 L266.9,289.9 L267.5,289.7 L268.1,293.0 L268.7,299.0 L269.3,299.5 L269.9,302.0 L270.5,304.5 L271.1,302.8 L271.7,307.2 L272.3,305.4 L272.9,310.4 L273.5,312.2 L274.1,312.4 L274.7,316.7 L275.3,316.0 L275.9,319.3 L276.5,318.0 L277.1,322.5 L277.7,325.8 L278.3,327.7 L278.9,326.2 L279.5,324.9 L280.1,330.2 L280.7,327.9 L281.3,325.0 L281.9,325.0 L282.5,325.4 L283.1,328.3 L283.7,325.9 L284.3,325.8 L284.9,327.0 L285.5,328.1 L286.1,327.7 L286.7,324.4 L287.3,329.5 L287.9,324.6 L288.5,325.7 L289.1,325.0 L289.7,325.8 L290.3,328.2 L290.9,329.1 L291.5,326.6 L292.1,327.2 L292.7,329.5 L293.3,329.4 L293.9,327.7 L294.5,329.7 L295.1,326.6 L295.7,324.9 L296.3,328.9 L296.9,328.4 L297.5,325.8 L298.1,330.5 L298.7,327.1 L299.3,325.8 L299.9,330.1 L300.5,329.7 L301.1,328.2 L301.7,327.7 L302.3,330.2 L302.9,330.2 L303.5,329.1 L304.1,330.5 L304.7,326.3 L305.3,325.6 L305.9,328.8 L306.5,327.6 L307.1,324.7 L307.7,326.2 L308.3,326.6 L308.9,329.0 L309.5,325.1 L310.1,326.6 L310.7,325.4 L311.3,328.7 L311.9,330.4 L312.5,326.7 L313.1,326.4 L313.7,327.7 L314.3,326.7 L314.9,326.2 L315.5,329.8 L316.1,326.3 L316.7,330.4 L317.3,325.3 L317.9,327.7 L318.5,324.8 L319.1,329.1 L319.7,330.4 L320.3,332.1 L320.9,324.5 L321.5,327.1 L322.1,324.8 L322.7,325.1 L323.3,326.0 L323.9,327.0 L324.5,324.8 L325.1,328.3 L325.7,330.0 L326.3,326.0 L326.9,329.0 L327.5,327.6 L328.1,327.8 L328.7,324.3 L329.3,328.4 L329.9,329.9 L330.5,328.5 L331.1,329.4 L331.7,327.0 L332.3,325.5 L332.9,328.6 L333.5,327.8 L334.1,326.6 L334.7,329.3 L335.3,330.3 L335.9,326.4 L336.5,327.0 L337.1,329.5 L337.7,328.6 L338.3,327.9 L338.9,327.4 L339.5,328.8 L340.1,325.1 L340.7,326.7 L341.3,329.9 L341.9,328.4 L342.5,330.0 L343.1,326.8 L343.7,326.4 L344.3,330.2 L344.9,326.4 L345.5,326.2 L346.1,326.0 L346.7,325.0 L347.3,324.6 L347.9,327.7 L348.5,329.5 L349.1,330.6 L349.7,326.2 L350.3,324.9 L350.9,327.4 L351.5,327.9 L352.1,325.9 L352.7,325.4 L353.3,325.6 L353.9,328.5 L354.5,324.1 L355.1,329.1 L355.7,325.6 L356.3,331.1 L356.9,330.3 L357.5,326.8 L358.1,326.8 L358.7,326.2 L359.3,325.4 L359.9,326.6 L360.5,325.0 L361.1,330.1 L361.7,330.4 L362.3,326.6 L362.9,327.4 L363.5,325.7 L364.1,326.6 L364.7,329.2 L365.3,327.3 L365.9,327.2 L366.5,329.5 L367.1,328.1 L367.7,329.6 L368.3,330.3 L368.9,325.5 L369.5,324.6 L370.1,330.4 L370.7,329.7 L371.3,324.6 L371.9,329.3 L372.5,328.6 L373.1,329.1 L373.7,327.7 L374.3,325.4" fill="none" stroke="#e2dc2a" stroke-width="1.1"/><path d="M248.5,284.8 L252.5,284.8 L250.5,288.5 Z" fill="#20c0a0"/></svg>
<div class="t" style="left:70.3px;top:300.0px;font-size:6.5px;color:#3e464c;font-weight:normal;background:#000;padding:0 1px 0 2.5px;">-50 dBm</div>
<div class="t" style="left:70.3px;top:334.0px;font-size:6.5px;color:#3e464c;font-weight:normal;background:#000;padding:0 1px 0 2.5px;">-100 dBm</div>
<div class="t" style="left:309px;top:287.5px;font-size:7px;color:#2cc2e2;font-weight:bold;transform:scaleX(0.9);transform-origin:left center;">M1[1]</div>
<div class="t" style="right:418.4px;top:287.5px;font-size:7px;color:#2cc2e2;font-weight:bold;transform:scaleX(0.84);transform-origin:right center;">-26.23 dBm</div>
<div class="t" style="left:309px;top:297.9px;font-size:7px;color:#2cc2e2;font-weight:bold;transform:scaleX(0.9);transform-origin:left center;">#0</div>
<div class="t" style="right:418.4px;top:297.9px;font-size:7px;color:#2cc2e2;font-weight:bold;transform:scaleX(0.8);transform-origin:right center;">2.4049820 GHz</div>
<div style="position:absolute;left:67px;top:352px;width:310px;height:9.5px;background:#000;"></div>
<div class="t" style="left:70px;top:352.5px;font-size:8px;color:#eef2f4;font-weight:bold;transform:scaleX(0.84);transform-origin:left center;">CF 2.39725 GHz</div>
<div class="t" style="left:169px;top:352.5px;font-size:8px;color:#eef2f4;font-weight:bold;transform:scaleX(0.87);transform-origin:left center;">1001 pts</div>
<div class="t" style="left:241.6px;top:352.5px;font-size:8px;color:#eef2f4;font-weight:bold;transform:scaleX(0.87);transform-origin:left center;">7.85 MHz/</div>
<div class="t" style="right:419px;top:352.5px;font-size:8px;color:#eef2f4;font-weight:bold;transform:scaleX(0.87);transform-origin:right center;">Span 78.5 MHz</div>
<div style="position:absolute;left:67px;top:361.5px;width:310px;height:3.1000000000000227px;background:#1c2a31;"></div>
<div style="position:absolute;left:67px;top:364.6px;width:310px;height:8.799999999999955px;background:#27353c;"></div>
<div class="t" style="left:70px;top:364.7px;font-size:8.3px;color:#e8ecee;font-weight:normal;transform:scaleX(0.88);transform-origin:left center;">2 Spectrogram</div>
<div class="t" style="left:132.3px;top:364.9px;font-size:8px;color:#d8dee2;font-weight:normal;transform:scaleX(0.83);transform-origin:left center;">1Pk Clrw</div>
<svg width="790" height="496"><circle cx="128.6" cy="369" r="1.7" fill="#f0e040"/></svg>
<div style="position:absolute;left:169.5px;top:364.8px;width:203px;height:8.4px;background:linear-gradient(to right,#1a2a8a 0%,#1060d0 12%,#10a0e0 28%,#10b080 45%,#20b040 62%,#c8d820 78%,#f08020 90%,#e84020 100%);"></div>
<div class="t" style="left:85px;width:200px;text-align:center;top:366.1px;font-size:6px;color:rgba(40,60,80,0.45);font-weight:normal;">-150dBm</div>
<div class="t" style="left:115px;width:200px;text-align:center;top:366.1px;font-size:6px;color:rgba(40,60,80,0.45);font-weight:normal;">-100 dBm</div>
<div class="t" style="left:158px;width:200px;text-align:center;top:366.1px;font-size:6px;color:rgba(40,60,80,0.45);font-weight:normal;">-75 dBm</div>
<div class="t" style="left:200px;width:200px;text-align:center;top:366.1px;font-size:6px;color:rgba(40,60,80,0.45);font-weight:normal;">-60 dBm</div>
<div class="t" style="left:236px;width:200px;text-align:center;top:366.1px;font-size:6px;color:rgba(40,60,80,0.45);font-weight:normal;">-40dBm</div>
<div class="t" style="left:260px;width:200px;text-align:center;top:366.1px;font-size:6px;color:rgba(40,60,80,0.45);font-weight:normal;">-23dBm</div>
<div style="position:absolute;left:69.5px;top:373.6px;width:305px;height:67px;background:#06a65a;"></div>
<div style="position:absolute;left:191.8px;top:373.6px;width:82.5px;height:66.6px;background:linear-gradient(to right,#40b050 0%,#d8d028 3%,#f0a028 5%,#f0542a 8%,#f0542a 92%,#f0a028 95%,#d8d028 97%,#40b050 100%);"></div>
<svg width="790" height="496"><g stroke="#9c8c3a" stroke-width="1"><line x1="228.7" y1="403.9" x2="272.0" y2="403.9" stroke-opacity="0.69"/><line x1="230.4" y1="407.5" x2="246.2" y2="407.5" stroke-opacity="0.70"/><line x1="243.2" y1="415.4" x2="255.1" y2="415.4" stroke-opacity="0.62"/><line x1="244.2" y1="380.4" x2="272.0" y2="380.4" stroke-opacity="0.52"/><line x1="253.8" y1="438.3" x2="272.0" y2="438.3" stroke-opacity="0.75"/><line x1="194.9" y1="384.7" x2="225.1" y2="384.7" stroke-opacity="0.52"/><line x1="209.0" y1="386.9" x2="218.3" y2="386.9" stroke-opacity="0.69"/><line x1="246.2" y1="403.1" x2="272.0" y2="403.1" stroke-opacity="0.76"/><line x1="235.1" y1="407.0" x2="262.3" y2="407.0" stroke-opacity="0.61"/><line x1="255.7" y1="439.3" x2="272.0" y2="439.3" stroke-opacity="0.78"/><line x1="208.2" y1="395.0" x2="228.4" y2="395.0" stroke-opacity="0.53"/><line x1="218.8" y1="424.3" x2="262.4" y2="424.3" stroke-opacity="0.65"/><line x1="246.5" y1="436.8" x2="254.6" y2="436.8" stroke-opacity="0.58"/><line x1="223.1" y1="433.7" x2="272.0" y2="433.7" stroke-opacity="0.66"/><line x1="233.0" y1="379.2" x2="272.0" y2="379.2" stroke-opacity="0.61"/><line x1="214.6" y1="380.2" x2="263.1" y2="380.2" stroke-opacity="0.80"/><line x1="209.3" y1="382.2" x2="221.5" y2="382.2" stroke-opacity="0.52"/><line x1="205.0" y1="426.3" x2="236.5" y2="426.3" stroke-opacity="0.68"/><line x1="239.4" y1="386.9" x2="252.9" y2="386.9" stroke-opacity="0.76"/><line x1="220.1" y1="382.1" x2="237.0" y2="382.1" stroke-opacity="0.61"/><line x1="243.8" y1="437.6" x2="264.6" y2="437.6" stroke-opacity="0.85"/><line x1="218.4" y1="388.2" x2="262.3" y2="388.2" stroke-opacity="0.76"/><line x1="255.3" y1="381.0" x2="272.0" y2="381.0" stroke-opacity="0.60"/><line x1="214.4" y1="424.7" x2="234.8" y2="424.7" stroke-opacity="0.53"/><line x1="230.1" y1="380.4" x2="248.3" y2="380.4" stroke-opacity="0.74"/><line x1="222.1" y1="398.7" x2="270.4" y2="398.7" stroke-opacity="0.69"/><line x1="247.7" y1="411.8" x2="263.4" y2="411.8" stroke-opacity="0.56"/><line x1="244.7" y1="433.5" x2="263.2" y2="433.5" stroke-opacity="0.58"/><line x1="252.3" y1="422.6" x2="268.6" y2="422.6" stroke-opacity="0.88"/><line x1="231.4" y1="431.8" x2="257.1" y2="431.8" stroke-opacity="0.54"/><line x1="253.7" y1="377.0" x2="271.7" y2="377.0" stroke-opacity="0.78"/><line x1="245.1" y1="391.2" x2="272.0" y2="391.2" stroke-opacity="0.62"/><line x1="238.7" y1="385.9" x2="249.6" y2="385.9" stroke-opacity="0.59"/><line x1="246.8" y1="410.9" x2="272.0" y2="410.9" stroke-opacity="0.61"/><line x1="206.6" y1="434.1" x2="215.3" y2="434.1" stroke-opacity="0.61"/><line x1="197.7" y1="403.5" x2="213.2" y2="403.5" stroke-opacity="0.65"/><line x1="202.2" y1="411.7" x2="225.4" y2="411.7" stroke-opacity="0.86"/><line x1="234.7" y1="438.2" x2="271.8" y2="438.2" stroke-opacity="0.73"/><line x1="196.2" y1="383.6" x2="204.9" y2="383.6" stroke-opacity="0.86"/><line x1="253.7" y1="420.1" x2="262.6" y2="420.1" stroke-opacity="0.75"/><line x1="239.3" y1="405.8" x2="260.7" y2="405.8" stroke-opacity="0.90"/><line x1="227.9" y1="379.4" x2="266.8" y2="379.4" stroke-opacity="0.86"/><line x1="237.6" y1="422.4" x2="272.0" y2="422.4" stroke-opacity="0.87"/><line x1="236.5" y1="397.4" x2="272.0" y2="397.4" stroke-opacity="0.85"/><line x1="243.0" y1="401.6" x2="272.0" y2="401.6" stroke-opacity="0.73"/><line x1="217.7" y1="415.1" x2="250.2" y2="415.1" stroke-opacity="0.74"/><line x1="233.6" y1="379.7" x2="272.0" y2="379.7" stroke-opacity="0.85"/><line x1="218.1" y1="421.8" x2="257.0" y2="421.8" stroke-opacity="0.73"/><line x1="246.0" y1="403.1" x2="257.5" y2="403.1" stroke-opacity="0.80"/><line x1="231.3" y1="376.4" x2="259.5" y2="376.4" stroke-opacity="0.59"/><line x1="224.8" y1="419.9" x2="258.6" y2="419.9" stroke-opacity="0.87"/><line x1="194.7" y1="391.1" x2="215.3" y2="391.1" stroke-opacity="0.77"/><line x1="204.5" y1="387.7" x2="250.6" y2="387.7" stroke-opacity="0.76"/><line x1="249.3" y1="403.2" x2="271.0" y2="403.2" stroke-opacity="0.77"/><line x1="220.7" y1="387.4" x2="262.6" y2="387.4" stroke-opacity="0.87"/><line x1="217.8" y1="431.7" x2="250.3" y2="431.7" stroke-opacity="0.63"/><line x1="224.8" y1="383.4" x2="267.9" y2="383.4" stroke-opacity="0.84"/><line x1="252.9" y1="420.7" x2="272.0" y2="420.7" stroke-opacity="0.57"/><line x1="211.1" y1="403.8" x2="228.1" y2="403.8" stroke-opacity="0.67"/><line x1="224.6" y1="415.2" x2="245.9" y2="415.2" stroke-opacity="0.84"/><line x1="222.1" y1="438.3" x2="233.2" y2="438.3" stroke-opacity="0.51"/><line x1="196.6" y1="431.2" x2="234.3" y2="431.2" stroke-opacity="0.73"/><line x1="243.1" y1="394.6" x2="251.9" y2="394.6" stroke-opacity="0.55"/><line x1="195.5" y1="404.1" x2="238.4" y2="404.1" stroke-opacity="0.59"/><line x1="196.9" y1="383.7" x2="231.3" y2="383.7" stroke-opacity="0.68"/><line x1="234.6" y1="415.4" x2="272.0" y2="415.4" stroke-opacity="0.88"/><line x1="206.4" y1="419.0" x2="234.3" y2="419.0" stroke-opacity="0.57"/><line x1="223.3" y1="375.2" x2="261.3" y2="375.2" stroke-opacity="0.57"/><line x1="215.4" y1="392.2" x2="252.7" y2="392.2" stroke-opacity="0.71"/><line x1="240.9" y1="414.4" x2="265.4" y2="414.4" stroke-opacity="0.82"/><line x1="199.4" y1="433.4" x2="246.6" y2="433.4" stroke-opacity="0.79"/><line x1="222.1" y1="382.9" x2="256.4" y2="382.9" stroke-opacity="0.86"/><line x1="229.3" y1="399.0" x2="272.0" y2="399.0" stroke-opacity="0.82"/><line x1="222.7" y1="435.9" x2="258.1" y2="435.9" stroke-opacity="0.58"/><line x1="244.7" y1="421.4" x2="272.0" y2="421.4" stroke-opacity="0.79"/><line x1="249.8" y1="388.4" x2="272.0" y2="388.4" stroke-opacity="0.89"/><line x1="243.0" y1="409.4" x2="264.5" y2="409.4" stroke-opacity="0.86"/><line x1="215.6" y1="430.1" x2="227.1" y2="430.1" stroke-opacity="0.68"/><line x1="241.6" y1="410.3" x2="270.1" y2="410.3" stroke-opacity="0.51"/><line x1="198.0" y1="427.1" x2="239.6" y2="427.1" stroke-opacity="0.57"/><line x1="242.9" y1="396.3" x2="256.8" y2="396.3" stroke-opacity="0.56"/><line x1="238.9" y1="408.1" x2="272.0" y2="408.1" stroke-opacity="0.78"/><line x1="224.5" y1="436.0" x2="272.0" y2="436.0" stroke-opacity="0.53"/><line x1="226.7" y1="388.9" x2="246.8" y2="388.9" stroke-opacity="0.79"/><line x1="226.4" y1="416.0" x2="269.8" y2="416.0" stroke-opacity="0.72"/><line x1="217.6" y1="394.8" x2="261.1" y2="394.8" stroke-opacity="0.86"/><line x1="246.7" y1="388.0" x2="272.0" y2="388.0" stroke-opacity="0.71"/><line x1="206.5" y1="411.7" x2="237.0" y2="411.7" stroke-opacity="0.70"/><line x1="195.7" y1="413.8" x2="244.4" y2="413.8" stroke-opacity="0.71"/><line x1="243.7" y1="400.5" x2="272.0" y2="400.5" stroke-opacity="0.70"/><line x1="198.1" y1="419.4" x2="228.7" y2="419.4" stroke-opacity="0.67"/><line x1="251.3" y1="436.7" x2="270.6" y2="436.7" stroke-opacity="0.69"/><line x1="220.9" y1="382.8" x2="263.1" y2="382.8" stroke-opacity="0.86"/><line x1="213.7" y1="405.5" x2="229.7" y2="405.5" stroke-opacity="0.75"/><line x1="202.0" y1="434.6" x2="242.8" y2="434.6" stroke-opacity="0.51"/><line x1="208.1" y1="387.1" x2="244.9" y2="387.1" stroke-opacity="0.63"/><line x1="232.4" y1="397.6" x2="244.8" y2="397.6" stroke-opacity="0.79"/><line x1="225.6" y1="382.5" x2="244.2" y2="382.5" stroke-opacity="0.58"/><line x1="221.1" y1="409.0" x2="244.9" y2="409.0" stroke-opacity="0.67"/><line x1="203.9" y1="408.9" x2="220.5" y2="408.9" stroke-opacity="0.75"/><line x1="226.8" y1="416.0" x2="270.6" y2="416.0" stroke-opacity="0.74"/><line x1="208.4" y1="430.2" x2="247.5" y2="430.2" stroke-opacity="0.82"/><line x1="213.6" y1="433.2" x2="234.8" y2="433.2" stroke-opacity="0.87"/><line x1="255.9" y1="388.7" x2="272.0" y2="388.7" stroke-opacity="0.55"/><line x1="239.0" y1="390.1" x2="257.9" y2="390.1" stroke-opacity="0.54"/><line x1="220.1" y1="428.6" x2="261.3" y2="428.6" stroke-opacity="0.55"/><line x1="236.5" y1="400.7" x2="245.2" y2="400.7" stroke-opacity="0.58"/><line x1="250.5" y1="418.9" x2="272.0" y2="418.9" stroke-opacity="0.55"/><line x1="241.0" y1="407.4" x2="270.1" y2="407.4" stroke-opacity="0.77"/><line x1="198.4" y1="386.8" x2="210.8" y2="386.8" stroke-opacity="0.51"/><line x1="225.9" y1="410.4" x2="257.8" y2="410.4" stroke-opacity="0.56"/><line x1="206.6" y1="386.5" x2="249.9" y2="386.5" stroke-opacity="0.90"/><line x1="199.9" y1="434.7" x2="210.5" y2="434.7" stroke-opacity="0.88"/><line x1="241.4" y1="404.5" x2="263.1" y2="404.5" stroke-opacity="0.69"/><line x1="220.7" y1="408.0" x2="253.9" y2="408.0" stroke-opacity="0.51"/><line x1="246.3" y1="420.1" x2="262.0" y2="420.1" stroke-opacity="0.68"/><line x1="219.1" y1="422.6" x2="235.3" y2="422.6" stroke-opacity="0.57"/><line x1="195.0" y1="407.8" x2="240.5" y2="407.8" stroke-opacity="0.82"/><line x1="247.4" y1="420.3" x2="272.0" y2="420.3" stroke-opacity="0.66"/><line x1="225.3" y1="413.5" x2="272.0" y2="413.5" stroke-opacity="0.82"/></g><g stroke-width="1"><line x1="192.5" y1="374.5" x2="189.6" y2="374.5" stroke="#e0b028" stroke-opacity="0.55"/><line x1="273.5" y1="374.5" x2="275.6" y2="374.5" stroke="#e0b028" stroke-opacity="0.55"/><line x1="192.5" y1="375.5" x2="188.7" y2="375.5" stroke="#e0b028" stroke-opacity="0.55"/><line x1="273.5" y1="375.5" x2="276.5" y2="375.5" stroke="#e0b028" stroke-opacity="0.55"/><line x1="192.5" y1="376.5" x2="191.4" y2="376.5" stroke="#b8c838" stroke-opacity="0.55"/><line x1="273.5" y1="376.5" x2="276.8" y2="376.5" stroke="#d8d030" stroke-opacity="0.55"/><line x1="192.5" y1="377.5" x2="189.6" y2="377.5" stroke="#d8d030" stroke-opacity="0.55"/><line x1="273.5" y1="377.5" x2="274.8" y2="377.5" stroke="#b8c838" stroke-opacity="0.55"/><line x1="192.5" y1="378.5" x2="188.9" y2="378.5" stroke="#b8c838" stroke-opacity="0.55"/><line x1="273.5" y1="378.5" x2="276.1" y2="378.5" stroke="#e0b028" stroke-opacity="0.55"/><line x1="192.5" y1="379.5" x2="190.8" y2="379.5" stroke="#e0b028" stroke-opacity="0.55"/><line x1="273.5" y1="379.5" x2="275.2" y2="379.5" stroke="#b8c838" stroke-opacity="0.55"/><line x1="192.5" y1="380.5" x2="191.0" y2="380.5" stroke="#b8c838" stroke-opacity="0.55"/><line x1="273.5" y1="380.5" x2="275.0" y2="380.5" stroke="#d8d030" stroke-opacity="0.55"/><line x1="192.5" y1="381.5" x2="191.1" y2="381.5" stroke="#e0b028" stroke-opacity="0.55"/><line x1="273.5" y1="381.5" x2="275.8" y2="381.5" stroke="#d8d030" stroke-opacity="0.55"/><line x1="192.5" y1="382.5" x2="191.5" y2="382.5" stroke="#d8d030" stroke-opacity="0.55"/><line x1="273.5" y1="382.5" x2="275.1" y2="382.5" stroke="#d8d030" stroke-opacity="0.55"/><line x1="192.5" y1="383.5" x2="188.6" y2="383.5" stroke="#d8d030" stroke-opacity="0.55"/><line x1="273.5" y1="383.5" x2="277.1" y2="383.5" stroke="#b8c838" stroke-opacity="0.55"/><line x1="192.5" y1="384.5" x2="190.6" y2="384.5" stroke="#d8d030" stroke-opacity="0.55"/><line x1="273.5" y1="384.5" x2="276.1" y2="384.5" stroke="#e0b028" stroke-opacity="0.55"/><line x1="192.5" y1="385.5" x2="189.6" y2="385.5" stroke="#d8d030" stroke-opacity="0.55"/><line x1="273.5" y1="385.5" x2="277.3" y2="385.5" stroke="#e0b028" stroke-opacity="0.55"/><line x1="192.5" y1="386.5" x2="190.9" y2="386.5" stroke="#b8c838" stroke-opacity="0.55"/><line x1="273.5" y1="386.5" x2="275.4" y2="386.5" stroke="#b8c838" stroke-opacity="0.55"/><line x1="192.5" y1="387.5" x2="190.3" y2="387.5" stroke="#d8d030" stroke-opacity="0.55"/><line x1="273.5" y1="387.5" x2="275.3" y2="387.5" stroke="#b8c838" stroke-opacity="0.55"/><line x1="192.5" y1="388.5" x2="190.6" y2="388.5" stroke="#e0b028" stroke-opacity="0.55"/><line x1="273.5" y1="388.5" x2="276.3" y2="388.5" stroke="#e0b028" stroke-opacity="0.55"/><line x1="192.5" y1="389.5" x2="189.5" y2="389.5" stroke="#b8c838" stroke-opacity="0.55"/><line x1="273.5" y1="389.5" x2="274.7" y2="389.5" stroke="#b8c838" stroke-opacity="0.55"/><line x1="192.5" y1="390.5" x2="189.0" y2="390.5" stroke="#b8c838" stroke-opacity="0.55"/><line x1="273.5" y1="390.5" x2="276.6" y2="390.5" stroke="#d8d030" stroke-opacity="0.55"/><line x1="192.5" y1="391.5" x2="190.1" y2="391.5" stroke="#e0b028" stroke-opacity="0.55"/><line x1="273.5" y1="391.5" x2="275.0" y2="391.5" stroke="#b8c838" stroke-opacity="0.55"/><line x1="192.5" y1="392.5" x2="188.6" y2="392.5" stroke="#d8d030" stroke-opacity="0.55"/><line x1="273.5" y1="392.5" x2="277.3" y2="392.5" stroke="#b8c838" stroke-opacity="0.55"/><line x1="192.5" y1="393.5" x2="189.0" y2="393.5" stroke="#d8d030" stroke-opacity="0.55"/><line x1="273.5" y1="393.5" x2="276.1" y2="393.5" stroke="#b8c838" stroke-opacity="0.55"/><line x1="192.5" y1="394.5" x2="190.4" y2="394.5" stroke="#e0b028" stroke-opacity="0.55"/><line x1="273.5" y1="394.5" x2="277.0" y2="394.5" stroke="#b8c838" stroke-opacity="0.55"/><line x1="192.5" y1="395.5" x2="191.4" y2="395.5" stroke="#d8d030" stroke-opacity="0.55"/><line x1="273.5" y1="395.5" x2="276.4" y2="395.5" stroke="#d8d030" stroke-opacity="0.55"/><line x1="192.5" y1="396.5" x2="191.1" y2="396.5" stroke="#d8d030" stroke-opacity="0.55"/><line x1="273.5" y1="396.5" x2="277.3" y2="396.5" stroke="#b8c838" stroke-opacity="0.55"/><line x1="192.5" y1="397.5" x2="190.5" y2="397.5" stroke="#b8c838" stroke-opacity="0.55"/><line x1="273.5" y1="397.5" x2="277.2" y2="397.5" stroke="#b8c838" stroke-opacity="0.55"/><line x1="192.5" y1="398.5" x2="189.2" y2="398.5" stroke="#d8d030" stroke-opacity="0.55"/><line x1="273.5" y1="398.5" x2="276.3" y2="398.5" stroke="#b8c838" stroke-opacity="0.55"/><line x1="192.5" y1="399.5" x2="188.9" y2="399.5" stroke="#d8d030" stroke-opacity="0.55"/><line x1="273.5" y1="399.5" x2="275.8" y2="399.5" stroke="#d8d030" stroke-opacity="0.55"/><line x1="192.5" y1="400.5" x2="190.9" y2="400.5" stroke="#e0b028" stroke-opacity="0.55"/><line x1="273.5" y1="400.5" x2="276.3" y2="400.5" stroke="#d8d030" stroke-opacity="0.55"/><line x1="192.5" y1="401.5" x2="190.5" y2="401.5" stroke="#e0b028" stroke-opacity="0.55"/><line x1="273.5" y1="401.5" x2="276.1" y2="401.5" stroke="#b8c838" stroke-opacity="0.55"/><line x1="192.5" y1="402.5" x2="189.4" y2="402.5" stroke="#b8c838" stroke-opacity="0.55"/><line x1="273.5" y1="402.5" x2="275.0" y2="402.5" stroke="#d8d030" stroke-opacity="0.55"/><line x1="192.5" y1="403.5" x2="189.6" y2="403.5" stroke="#e0b028" stroke-opacity="0.55"/><line x1="273.5" y1="403.5" x2="276.6" y2="403.5" stroke="#b8c838" stroke-opacity="0.55"/><line x1="192.5" y1="404.5" x2="191.0" y2="404.5" stroke="#d8d030" stroke-opacity="0.55"/><line x1="273.5" y1="404.5" x2="274.7" y2="404.5" stroke="#e0b028" stroke-opacity="0.55"/><line x1="192.5" y1="405.5" x2="189.9" y2="405.5" stroke="#b8c838" stroke-opacity="0.55"/><line x1="273.5" y1="405.5" x2="274.6" y2="405.5" stroke="#e0b028" stroke-opacity="0.55"/><line x1="192.5" y1="406.5" x2="189.7" y2="406.5" stroke="#b8c838" stroke-opacity="0.55"/><line x1="273.5" y1="406.5" x2="275.9" y2="406.5" stroke="#b8c838" stroke-opacity="0.55"/><line x1="192.5" y1="407.5" x2="191.1" y2="407.5" stroke="#e0b028" stroke-opacity="0.55"/><line x1="273.5" y1="407.5" x2="274.6" y2="407.5" stroke="#b8c838" stroke-opacity="0.55"/><line x1="192.5" y1="408.5" x2="190.5" y2="408.5" stroke="#d8d030" stroke-opacity="0.55"/><line x1="273.5" y1="408.5" x2="274.9" y2="408.5" stroke="#e0b028" stroke-opacity="0.55"/><line x1="192.5" y1="409.5" x2="189.8" y2="409.5" stroke="#d8d030" stroke-opacity="0.55"/><line x1="273.5" y1="409.5" x2="276.4" y2="409.5" stroke="#b8c838" stroke-opacity="0.55"/><line x1="192.5" y1="410.5" x2="191.2" y2="410.5" stroke="#b8c838" stroke-opacity="0.55"/><line x1="273.5" y1="410.5" x2="275.6" y2="410.5" stroke="#d8d030" stroke-opacity="0.55"/><line x1="192.5" y1="411.5" x2="189.0" y2="411.5" stroke="#b8c838" stroke-opacity="0.55"/><line x1="273.5" y1="411.5" x2="274.9" y2="411.5" stroke="#e0b028" stroke-opacity="0.55"/><line x1="192.5" y1="412.5" x2="188.9" y2="412.5" stroke="#e0b028" stroke-opacity="0.55"/><line x1="273.5" y1="412.5" x2="275.9" y2="412.5" stroke="#b8c838" stroke-opacity="0.55"/><line x1="192.5" y1="413.5" x2="189.4" y2="413.5" stroke="#b8c838" stroke-opacity="0.55"/><line x1="273.5" y1="413.5" x2="275.9" y2="413.5" stroke="#b8c838" stroke-opacity="0.55"/><line x1="192.5" y1="414.5" x2="190.1" y2="414.5" stroke="#d8d030" stroke-opacity="0.55"/><line x1="273.5" y1="414.5" x2="274.8" y2="414.5" stroke="#e0b028" stroke-opacity="0.55"/><line x1="192.5" y1="415.5" x2="188.6" y2="415.5" stroke="#e0b028" stroke-opacity="0.55"/><line x1="273.5" y1="415.5" x2="277.3" y2="415.5" stroke="#b8c838" stroke-opacity="0.55"/><line x1="192.5" y1="416.5" x2="191.0" y2="416.5" stroke="#b8c838" stroke-opacity="0.55"/><line x1="273.5" y1="416.5" x2="275.3" y2="416.5" stroke="#e0b028" stroke-opacity="0.55"/><line x1="192.5" y1="417.5" x2="188.9" y2="417.5" stroke="#b8c838" stroke-opacity="0.55"/><line x1="273.5" y1="417.5" x2="274.7" y2="417.5" stroke="#b8c838" stroke-opacity="0.55"/><line x1="192.5" y1="418.5" x2="189.4" y2="418.5" stroke="#e0b028" stroke-opacity="0.55"/><line x1="273.5" y1="418.5" x2="274.6" y2="418.5" stroke="#b8c838" stroke-opacity="0.55"/><line x1="192.5" y1="419.5" x2="190.4" y2="419.5" stroke="#e0b028" stroke-opacity="0.55"/><line x1="273.5" y1="419.5" x2="276.5" y2="419.5" stroke="#b8c838" stroke-opacity="0.55"/><line x1="192.5" y1="420.5" x2="190.7" y2="420.5" stroke="#e0b028" stroke-opacity="0.55"/><line x1="273.5" y1="420.5" x2="276.6" y2="420.5" stroke="#b8c838" stroke-opacity="0.55"/><line x1="192.5" y1="421.5" x2="189.6" y2="421.5" stroke="#e0b028" stroke-opacity="0.55"/><line x1="273.5" y1="421.5" x2="277.1" y2="421.5" stroke="#b8c838" stroke-opacity="0.55"/><line x1="192.5" y1="422.5" x2="189.9" y2="422.5" stroke="#b8c838" stroke-opacity="0.55"/><line x1="273.5" y1="422.5" x2="275.5" y2="422.5" stroke="#b8c838" stroke-opacity="0.55"/><line x1="192.5" y1="423.5" x2="190.1" y2="423.5" stroke="#e0b028" stroke-opacity="0.55"/><line x1="273.5" y1="423.5" x2="276.4" y2="423.5" stroke="#b8c838" stroke-opacity="0.55"/><line x1="192.5" y1="424.5" x2="190.5" y2="424.5" stroke="#e0b028" stroke-opacity="0.55"/><line x1="273.5" y1="424.5" x2="275.5" y2="424.5" stroke="#b8c838" stroke-opacity="0.55"/><line x1="192.5" y1="425.5" x2="190.4" y2="425.5" stroke="#d8d030" stroke-opacity="0.55"/><line x1="273.5" y1="425.5" x2="277.1" y2="425.5" stroke="#e0b028" stroke-opacity="0.55"/><line x1="192.5" y1="426.5" x2="190.2" y2="426.5" stroke="#b8c838" stroke-opacity="0.55"/><line x1="273.5" y1="426.5" x2="277.4" y2="426.5" stroke="#e0b028" stroke-opacity="0.55"/><line x1="192.5" y1="427.5" x2="191.1" y2="427.5" stroke="#d8d030" stroke-opacity="0.55"/><line x1="273.5" y1="427.5" x2="275.1" y2="427.5" stroke="#b8c838" stroke-opacity="0.55"/><line x1="192.5" y1="428.5" x2="188.7" y2="428.5" stroke="#b8c838" stroke-opacity="0.55"/><line x1="273.5" y1="428.5" x2="275.3" y2="428.5" stroke="#d8d030" stroke-opacity="0.55"/><line x1="192.5" y1="429.5" x2="189.3" y2="429.5" stroke="#e0b028" stroke-opacity="0.55"/><line x1="273.5" y1="429.5" x2="275.7" y2="429.5" stroke="#e0b028" stroke-opacity="0.55"/><line x1="192.5" y1="430.5" x2="189.2" y2="430.5" stroke="#e0b028" stroke-opacity="0.55"/><line x1="273.5" y1="430.5" x2="276.0" y2="430.5" stroke="#b8c838" stroke-opacity="0.55"/><line x1="192.5" y1="431.5" x2="190.6" y2="431.5" stroke="#e0b028" stroke-opacity="0.55"/><line x1="273.5" y1="431.5" x2="276.8" y2="431.5" stroke="#e0b028" stroke-opacity="0.55"/><line x1="192.5" y1="432.5" x2="190.7" y2="432.5" stroke="#d8d030" stroke-opacity="0.55"/><line x1="273.5" y1="432.5" x2="275.1" y2="432.5" stroke="#e0b028" stroke-opacity="0.55"/><line x1="192.5" y1="433.5" x2="190.2" y2="433.5" stroke="#e0b028" stroke-opacity="0.55"/><line x1="273.5" y1="433.5" x2="275.0" y2="433.5" stroke="#e0b028" stroke-opacity="0.55"/><line x1="192.5" y1="434.5" x2="191.0" y2="434.5" stroke="#e0b028" stroke-opacity="0.55"/><line x1="273.5" y1="434.5" x2="274.6" y2="434.5" stroke="#b8c838" stroke-opacity="0.55"/><line x1="192.5" y1="435.5" x2="188.6" y2="435.5" stroke="#d8d030" stroke-opacity="0.55"/><line x1="273.5" y1="435.5" x2="274.7" y2="435.5" stroke="#d8d030" stroke-opacity="0.55"/><line x1="192.5" y1="436.5" x2="191.2" y2="436.5" stroke="#d8d030" stroke-opacity="0.55"/><line x1="273.5" y1="436.5" x2="275.9" y2="436.5" stroke="#e0b028" stroke-opacity="0.55"/><line x1="192.5" y1="437.5" x2="191.4" y2="437.5" stroke="#b8c838" stroke-opacity="0.55"/><line x1="273.5" y1="437.5" x2="275.6" y2="437.5" stroke="#e0b028" stroke-opacity="0.55"/><line x1="192.5" y1="438.5" x2="189.7" y2="438.5" stroke="#e0b028" stroke-opacity="0.55"/><line x1="273.5" y1="438.5" x2="275.1" y2="438.5" stroke="#e0b028" stroke-opacity="0.55"/><line x1="192.5" y1="439.5" x2="188.8" y2="439.5" stroke="#d8d030" stroke-opacity="0.55"/><line x1="273.5" y1="439.5" x2="275.6" y2="439.5" stroke="#b8c838" stroke-opacity="0.55"/></g></svg>
<div style="position:absolute;left:67px;top:440.6px;width:310px;height:7.7999999999999545px;background:#000;"></div>
<div class="t" style="left:70px;top:440.4px;font-size:8px;color:#eef2f4;font-weight:bold;transform:scaleX(0.84);transform-origin:left center;">CF 2.39725 GHz</div>
<div class="t" style="left:169px;top:440.4px;font-size:8px;color:#eef2f4;font-weight:bold;transform:scaleX(0.87);transform-origin:left center;">1001 pts</div>
<div class="t" style="left:158px;width:200px;text-align:center;top:440.4px;font-size:8px;color:#eef2f4;font-weight:bold;transform:scaleX(0.87);transform-origin:center center;">Span 78.5 MHz</div>
<div class="t" style="right:419px;top:440.4px;font-size:8px;color:#eef2f4;font-weight:bold;transform:scaleX(0.83);transform-origin:right center;">Frame # 0</div>
<div style="position:absolute;left:378.5px;top:252px;width:308.5px;height:0.8000000000000114px;background:#34444c;"></div>
<div class="t" style="left:385px;top:259.5px;font-size:9.2px;color:#e6ebee;font-weight:bold;transform:scaleX(0.84);transform-origin:left center;">Spectrum 2</div>
<div class="t" style="left:436.7px;top:255.1px;font-size:7px;color:#c8d0d4;font-weight:normal;transform:scaleX(0.92);transform-origin:left center;">Ref Level</div>
<div class="t" style="left:467.7px;top:255.1px;font-size:7px;color:#c8d0d4;font-weight:normal;transform:scaleX(0.92);transform-origin:left center;">0.00 dBm</div>
<div class="t" style="left:436.7px;top:266.0px;font-size:7px;color:#c8d0d4;font-weight:normal;transform:scaleX(0.92);transform-origin:left center;">Att</div>
<div class="t" style="right:294px;top:266.0px;font-size:7px;color:#c8d0d4;font-weight:normal;transform:scaleX(0.92);transform-origin:right center;">10 dB</div>
<div class="t" style="left:504.6px;top:266.0px;font-size:7px;color:#c8d0d4;font-weight:normal;transform:scaleX(0.92);transform-origin:left center;">SWT</div>
<div class="t" style="left:521px;top:266.0px;font-size:7px;color:#c8d0d4;font-weight:normal;transform:scaleX(0.92);transform-origin:left center;">5.2 ms</div>
<div class="t" style="left:551px;top:255.1px;font-size:7px;color:#c8d0d4;font-weight:normal;transform:scaleX(0.92);transform-origin:left center;">RBW</div>
<div class="t" style="left:569.5px;top:255.1px;font-size:7px;color:#c8d0d4;font-weight:normal;transform:scaleX(0.92);transform-origin:left center;">3 MHz</div>
<div class="t" style="left:551px;top:266.1px;font-size:7px;color:#c8d0d4;font-weight:normal;transform:scaleX(0.92);transform-origin:left center;">VBW</div>
<div class="t" style="left:569.5px;top:266.1px;font-size:7px;color:#c8d0d4;font-weight:normal;transform:scaleX(0.92);transform-origin:left center;">3 MHz</div>
<div class="t" style="left:598px;top:266.1px;font-size:7px;color:#c8d0d4;font-weight:normal;transform:scaleX(0.92);transform-origin:left center;">Mode</div>
<div class="t" style="left:619px;top:266.1px;font-size:7px;color:#c8d0d4;font-weight:normal;transform:scaleX(0.92);transform-origin:left center;">Auto Sweep</div>
<div style="position:absolute;left:378.5px;top:274px;width:308.5px;height:1.1000000000000227px;background:#46565e;"></div>
<div style="position:absolute;left:378.5px;top:275.1px;width:308.5px;height:8.399999999999977px;background:#23323a;"></div>
<div class="t" style="left:381px;top:275.5px;font-size:8.3px;color:#e8ecee;font-weight:normal;transform:scaleX(0.91);transform-origin:left center;">2 Marker Table</div>
<div style="position:absolute;left:381px;top:285px;width:304.5px;height:9.699999999999989px;background:#56646c;"></div>
<div style="position:absolute;left:431.3px;top:285px;width:1.0px;height:9.699999999999989px;background:#404c53;"></div>
<div style="position:absolute;left:456px;top:285px;width:1px;height:9.699999999999989px;background:#404c53;"></div>
<div style="position:absolute;left:476.6px;top:285px;width:1.0px;height:9.699999999999989px;background:#404c53;"></div>
<div style="position:absolute;left:583px;top:285px;width:1px;height:9.699999999999989px;background:#404c53;"></div>
<div class="t" style="left:305.4px;width:200px;text-align:center;top:285.9px;font-size:8px;color:#dfe5e8;font-weight:normal;">Type</div>
<div class="t" style="left:343.8px;width:200px;text-align:center;top:285.9px;font-size:8px;color:#dfe5e8;font-weight:normal;">Ref</div>
<div class="t" style="left:366.5px;width:200px;text-align:center;top:285.9px;font-size:8px;color:#dfe5e8;font-weight:normal;">Trc</div>
<div class="t" style="left:430px;width:200px;text-align:center;top:285.9px;font-size:8px;color:#dfe5e8;font-weight:normal;">X-Value</div>
<div class="t" style="left:534px;width:200px;text-align:center;top:285.9px;font-size:8px;color:#dfe5e8;font-weight:normal;">Y-Value</div>
<div style="position:absolute;left:381px;top:294.7px;width:304.5px;height:19.30000000000001px;background:#000;"></div>
<div class="t" style="left:305.4px;width:200px;text-align:center;top:295.6px;font-size:8px;color:#e8ecee;font-weight:normal;">PWR1</div>
<div class="t" style="left:305.4px;width:200px;text-align:center;top:304.3px;font-size:8px;color:#e8ecee;font-weight:normal;">Function</div>
<div class="t" style="right:120.70000000000005px;top:295.1px;font-size:8.5px;color:#f0f3f5;font-weight:bold;transform:scaleX(0.95);transform-origin:right center;">-4.38 dBm</div>
<div class="t" style="right:120.70000000000005px;top:304.0px;font-size:8.5px;color:#f0f3f5;font-weight:bold;transform:scaleX(0.93);transform-origin:right center;">PWR101412 NRP8S</div>
<div style="position:absolute;left:684.8px;top:285px;width:1.0px;height:29px;background:#7a8a92;"></div>
<div style="position:absolute;left:740.2px;top:27.2px;width:9.599999999999909px;height:10.500000000000004px;background:#e8582a;"></div>
<svg width="790" height="496"><path d="M742.6,29.6 L747.4,35.3 M747.4,29.6 L742.6,35.3" stroke="#fff" stroke-width="1.3"/></svg>
<div class="t" style="left:697.7px;top:36.1px;font-size:8.6px;color:#e2e8ea;font-weight:bold;transform:scaleX(0.95);transform-origin:left center;">Sequencer</div>
<div style="position:absolute;left:689px;top:54.9px;width:61px;height:33.6px;background:#2f4f5a;"></div>
<div class="t" style="left:698px;top:60.1px;font-size:8.6px;color:#d8e6ee;font-weight:bold;transform:scaleX(0.95);transform-origin:left center;">Sequencer</div>
<div style="position:absolute;left:689px;top:71.3px;width:30px;height:11.700000000000003px;background:#1c2e35;"></div>
<div style="position:absolute;left:719px;top:71.3px;width:31px;height:11.700000000000003px;background:#108ad0;"></div>
<div class="t" style="left:697.7px;top:72.9px;font-size:8.6px;color:#e8eef0;font-weight:bold;">On</div>
<div class="t" style="left:727.8px;top:72.9px;font-size:8.6px;color:#dff0fa;font-weight:bold;">Off</div>
<div style="position:absolute;left:689px;top:128.5px;width:60.5px;height:33.900000000000006px;background:#2e5563;"></div>
<div class="t" style="left:619.3px;width:200px;text-align:center;top:134.0px;font-size:7.5px;color:#58828f;font-weight:normal;">Continuous</div>
<div class="t" style="left:619.3px;width:200px;text-align:center;top:146.2px;font-size:7.5px;color:#58828f;font-weight:normal;">Sequence</div>
<div style="position:absolute;left:689px;top:165px;width:60.5px;height:33.900000000000006px;background:#2e5563;"></div>
<div class="t" style="left:619.3px;width:200px;text-align:center;top:169.9px;font-size:7.5px;color:#58828f;font-weight:normal;">Single</div>
<div class="t" style="left:619.3px;width:200px;text-align:center;top:182.7px;font-size:7.5px;color:#58828f;font-weight:normal;">Sequence</div>
<div style="position:absolute;left:689px;top:201px;width:60.5px;height:35px;background:#2e5563;"></div>
<div class="t" style="left:619.3px;width:200px;text-align:center;top:203.6px;font-size:7.5px;color:#58828f;font-weight:normal;">Channel</div>
<div class="t" style="left:619.3px;width:200px;text-align:center;top:212.8px;font-size:7.5px;color:#58828f;font-weight:normal;">Defined</div>
<div class="t" style="left:619.3px;width:200px;text-align:center;top:222.8px;font-size:7.5px;color:#58828f;font-weight:normal;">Sequence</div>
<div style="position:absolute;left:40px;top:449px;width:710px;height:20px;background:#1a2d35;"></div>
<div style="position:absolute;left:40px;top:449px;width:532px;height:3.5px;background:#2b3e46;"></div>
<div style="position:absolute;left:124px;top:449px;width:5px;height:20px;background:#2e4750;"></div>
<svg width="790" height="496"><path d="M116.5,460.8 L121.9,460.8 M564.8,461 L569.6,461" stroke="#8a9aa2" stroke-width="1"/></svg>
<div style="position:absolute;left:571.4px;top:451.3px;width:178.60000000000002px;height:17.69999999999999px;background:#2c4f5c;"></div>
<div class="t" style="left:575.7px;top:457.0px;font-size:8.3px;color:#e0e8ec;font-weight:normal;transform:scaleX(0.95);transform-origin:left center;">Sweeping...</div>
<div class="t" style="left:620.8px;top:457.2px;font-size:8px;color:#e0e8ec;font-weight:normal;transform:scaleX(0.95);transform-origin:left center;">Ch1:</div>
<div class="t" style="left:545px;width:200px;text-align:center;top:454.0px;font-size:6.5px;color:#e0e8ec;font-weight:normal;">Avg</div>
<div class="t" style="left:545px;width:200px;text-align:center;top:462.1px;font-size:6.5px;color:#e0e8ec;font-weight:normal;">None</div>
<svg width="790" height="496"><rect x="712.6" y="455.3" width="8.4" height="12.5" fill="none" stroke="#d8e2e6" stroke-width="1.2"/><rect x="715" y="453.8" width="3.6" height="1.8" fill="#d8e2e6"/><rect x="714" y="461" width="5.6" height="5.5" fill="#38b848"/></svg>
<div class="t" style="left:725px;top:457.2px;font-size:8px;color:#e0e8ec;font-weight:bold;transform:scaleX(0.92);transform-origin:left center;">45 %</div>
</body></html>
